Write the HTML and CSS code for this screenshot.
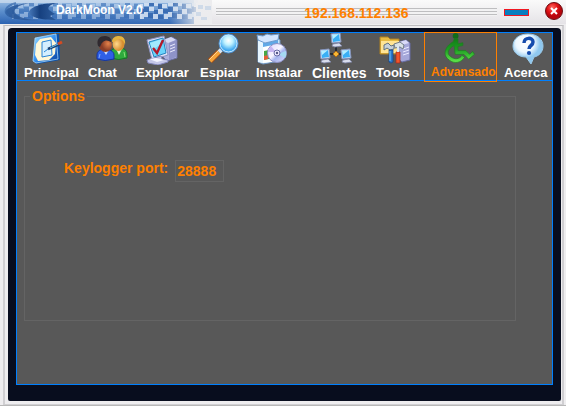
FILE: index.html
```html
<!DOCTYPE html>
<html lang="es">
<head>
<meta charset="utf-8">
<title>DarkMoon V2.0</title>
<link rel="stylesheet" href="styles.css">
</head>
<body>
<div class="window">
  <header class="titlebar">
    <div class="brand">
      <svg class="brand-art" viewBox="0 0 212 24" preserveAspectRatio="none" aria-hidden="true">
        <defs>
          <linearGradient id="sky" x2="0" y2="1"><stop offset="0" stop-color="#9dbfe4"/><stop offset=".45" stop-color="#5e90cd"/><stop offset="1" stop-color="#2b62b2"/></linearGradient>
          <linearGradient id="fade"><stop offset="0" stop-color="#ececee" stop-opacity="0"/><stop offset=".8" stop-color="#ececee" stop-opacity=".05"/><stop offset=".93" stop-color="#ececee" stop-opacity=".8"/><stop offset="1" stop-color="#ececee"/></linearGradient>
          <linearGradient id="moon"><stop offset="0" stop-color="#4677b8"/><stop offset=".4" stop-color="#16407f"/><stop offset="1" stop-color="#2d5c9d"/></linearGradient>
          <pattern id="checks" width="24" height="20" patternUnits="userSpaceOnUse">
            <path fill="#d7e4f4" d="M0 1h5v5H0zM10 1h4v5h-4zM18 4h5v4h-5zM5 7h5v4H5zM14 9h5v5h-5zM0 12h4v5H0zM9 14h5v5H9zM20 14h4v5h-4z"/>
            <path fill="#2a60ac" d="M5 2h5v4H5zM14 4h4v5h-4zM0 7h5v5H0zM10 10h4v4h-4zM19 9h5v4h-5zM4 13h5v5H4zM14 15h5v4h-5z"/>
          </pattern>
        </defs>
        <path fill="url(#sky)" d="M0 0h194v24H0z"/>
        <path fill="#dce6f1" opacity=".6" d="M0 0h198v3H0z"/>
        <path fill="url(#checks)" opacity=".42" d="M12 3h130v18H12z"/>
        <path fill="url(#checks)" opacity=".85" d="M140 3h56v18h-56z"/>
        <path fill="url(#fade)" d="M0 0h212v24H0z"/>
        <path fill="url(#moon)" d="M56 3C42 3 30 7 29 12c0 5 12 8 27 8l-6-4 5-2-6-4c-2-3 1-5 7-7z"/>
        <path fill="#2a599b" opacity=".85" d="M30 3C17 5 12 10 16 14c4 4 13 6 23 6-17 1-30-1-33-6C3 9 14 4 30 3z"/>
        <path fill="none" stroke="#3467a9" stroke-width="2" opacity=".7" d="M16 3C5 6 3 12 9 16"/>
        <path fill="#cfdae8" d="M198 5h5v4h-5zM205 6h6v4h-6zM196 12h5v4h-5zM201 17h6v3h-6z"/>
      </svg>
      <h1 class="brand-name">DarkMoon V2.0</h1>
    </div>
    <div class="rails"><span class="address">192.168.112.136</span></div>
    <button class="minimize" type="button" aria-label="Minimizar"></button>
    <button class="close" type="button" aria-label="Cerrar">
      <svg viewBox="0 0 20 20" aria-hidden="true">
        <defs><radialGradient id="red" cx=".4" cy=".3"><stop offset="0" stop-color="#ff6d65"/><stop offset=".6" stop-color="#e31316"/><stop offset="1" stop-color="#b8060d"/></radialGradient></defs>
        <circle cx="10" cy="10" r="8.500" fill="url(#red)" stroke="#6b1015"/>
        <path stroke="#fff" stroke-width="2" d="m7 7 6 6m0-6-6 6"/>
      </svg>
    </button>
  </header>

  <div class="frame">
    <div class="bezel">
      <div class="panel">
        <nav class="toolbar" aria-label="Secciones">
          <button class="tool" type="button">
            <svg class="icon" viewBox="0 0 32 32" aria-hidden="true">
              <defs><linearGradient id="pb" x2="1" y2="1"><stop offset="0" stop-color="#9bdcff"/><stop offset=".5" stop-color="#338ff0"/><stop offset="1" stop-color="#063f9c"/></linearGradient></defs>
              <path fill="#0851ae" d="m5 4 22-3 1 26-23 4-4-3z"/>
              <path fill="url(#pb)" stroke="#b9e4ff" stroke-width=".7" d="m3 5 21-4 2 25-22 4-3-2z"/>
              <path fill="#fff8d8" d="m8 6 11-2 5 6-1 11-6 6-11 1-3-6 1-11z"/>
              <path fill="#d5efff" stroke="#2883d5" d="m10 9 9-2 1 15-10 2z"/>
              <path stroke="#173f70" stroke-width="2.5" d="m16 16 12-5"/>
              <path stroke="#68c1f2" d="m18 15 8-4"/>
              <path stroke="#d54b22" stroke-width="3" d="m26 11 4-2"/>
              <path fill="none" stroke="#2987d6" d="m16 16-4 3"/>
            </svg>
            <span class="label">Principal</span>
          </button>
          <button class="tool" type="button">
            <svg class="icon" viewBox="0 0 32 32" aria-hidden="true">
              <defs>
                <radialGradient id="skin" cx=".35" cy=".5"><stop stop-color="#ffd98c"/><stop offset="1" stop-color="#d78e31"/></radialGradient>
                <radialGradient id="brown" cx=".7" cy=".4"><stop stop-color="#e5824a"/><stop offset="1" stop-color="#8a3d27"/></radialGradient>
              </defs>
              <path fill="#2eaa3d" stroke="#147425" d="M14 25v-5c0-3 4-5 9-5s8 2 8 6v4q-8 3-17 0z"/>
              <path fill="#dcf5d0" d="m20 16 3 6 3-6z"/>
              <ellipse cx="22.500" cy="11" rx="6" ry="7" fill="url(#skin)"/>
              <path fill="#e6b43e" d="M16 9c0-5 4-6 7-6 4 0 7 3 6 9-1-4-3-6-7-6-2 2-4 3-6 3z"/>
              <path fill="#2f5fe6" stroke="#1234a1" d="M1 26v-4c0-4 4-6 8-6s9 2 9 6v4q-9 3-17 0z"/>
              <path fill="#c5d9ff" d="m7 17 3 5 3-5z"/>
              <ellipse cx="9.500" cy="12" rx="6.500" ry="7" fill="url(#brown)"/>
              <path fill="#302a30" d="M2 13C0 6 4 3 9 3c5 0 7 4 6 6-3-2-6-2-8 0-2 1-2 3-3 5z"/>
              <path stroke="#7faaff" d="m4 21-1 4"/><path stroke="#8ade76" d="m28 19 1 5"/>
            </svg>
            <span class="label">Chat</span>
          </button>
          <button class="tool" type="button">
            <svg class="icon icon-indent" viewBox="0 0 32 32" aria-hidden="true">
              <path fill="#aaaedc" stroke="#6b6fa4" d="m17 7 9-3 5 3v18l-10 3-4-4z"/>
              <path fill="#d7d9f3" d="m17 7 8-3 5 3-8 3z"/>
              <path fill="#8f93c9" d="m23 10 7-3v17l-7 3z"/>
              <path stroke="#e9eafd" d="m24 13 5-2m-5 5 5-2m-5 5 5-2"/>
              <path fill="#dcdff6" stroke="#8b91c1" d="m1 7 17-4 4 19-16 5z"/>
              <path fill="#6bd3fb" stroke="#2586c1" d="m3 9 14-4 3 15-12 4z"/>
              <path fill="#b9f2ff" opacity=".7" d="m4 10 12-4 1 4L6 17z"/>
              <path fill="none" stroke="#b2192c" stroke-width="2.4" d="m7 15 4 5 6-13"/>
              <path fill="#c5c7e8" stroke="#8185ba" d="m8 25 7-2 1 3 6 1v2l-10 3-10-2-1-3z"/>
              <path fill="#f3f3ff" d="m3 26 7-1 8 2-7 2z"/>
            </svg>
            <span class="label">Explorar</span>
          </button>
          <button class="tool" type="button">
            <svg class="icon" viewBox="0 0 32 32" aria-hidden="true">
              <defs><radialGradient id="lens" cx=".5" cy=".35"><stop stop-color="#fff"/><stop offset=".45" stop-color="#bff2ff"/><stop offset="1" stop-color="#42aaf0"/></radialGradient></defs>
              <path stroke="#a14c15" stroke-width="6" d="m2 28 9-9"/>
              <path stroke="#f4a33b" stroke-width="4" d="m2 28 9-9"/>
              <path stroke="#ffd392" d="m1 27 9-9"/>
              <path stroke="#d7e5f1" stroke-width="4" d="m11 19 3-3"/>
              <circle cx="20.500" cy="10.500" r="9.500" fill="url(#lens)" stroke="#4e8cc9"/>
              <circle cx="20.500" cy="10.500" r="8.500" fill="none" stroke="#cae9ff"/>
            </svg>
            <span class="label">Espiar</span>
          </button>
          <button class="tool" type="button">
            <svg class="icon icon-flush" viewBox="0 0 32 32" aria-hidden="true">
              <defs><linearGradient id="disc" x2="1" y2="1"><stop stop-color="#ddd6ff"/><stop offset=".45" stop-color="#f8f5ff"/><stop offset=".6" stop-color="#a5b4ee"/><stop offset="1" stop-color="#e1ddff"/></linearGradient></defs>
              <path fill="#c6e6f9" stroke="#7094bf" d="m2 7 18-3 4 3v21l-17 3-5-2z"/>
              <path fill="#e7f6ff" d="m2 7 5 2v21l-5-1z"/>
              <path fill="#fff" d="m7 9 15-2v21L7 30z"/>
              <path fill="#60a9e7" d="m7 10 15-3v4L7 14z"/>
              <path fill="#d4e6ff" stroke="#6d9bce" d="m2 7-1-5 6 1 4-2 4 1 8-1-1 6-13 3z"/>
              <path fill="#46a746" d="m8 18 5-1v9l-5 1z"/><path fill="#e45f38" d="m8 23 4-1v4l-4 1z"/>
              <circle cx="21" cy="20" r="9.500" fill="url(#disc)" stroke="#8c90c4"/>
              <path fill="#c8b6f2" d="m20 19-5-6q-3 3-3 6z"/><path fill="#a5daf2" d="m22 21 7 4q2-3 1-7z"/>
              <circle cx="21" cy="20" r="3" fill="#eeeaff" stroke="#686ba6"/><circle cx="21" cy="20" r="1.2" fill="#535887"/>
            </svg>
            <span class="label">Instalar</span>
          </button>
          <button class="tool" type="button">
            <svg class="icon" viewBox="0 0 32 32" aria-hidden="true">
              <defs>
                <g id="pc"><path fill="#e4edfc" stroke="#8294be" d="M0 1 9 0l1 9-9 1z"/><path fill="#39aff5" d="m1 2 7-1 1 7-7 1z"/><path fill="#b5eeff" d="m1 2 7-1-6 5z"/><path fill="#d9dded" stroke="#7f86a8" stroke-width=".8" d="m2 11 6-1 3 3-7 1-3-1z"/></g>
              </defs>
              <path fill="none" stroke="#252c34" stroke-width="2" d="M16 13v8M8 21h17"/>
              <use href="#pc" x="11" y="0"/><use href="#pc" x="0" y="16"/><use href="#pc" x="21" y="16"/>
              <path fill="#f6b735" stroke="#aa6816" d="m16 18 3 3-3 3-3-3z"/>
            </svg>
            <span class="label label-large">Clientes</span>
          </button>
          <button class="tool" type="button">
            <svg class="icon icon-near" viewBox="0 0 32 32" aria-hidden="true">
              <path fill="#e9bb42" stroke="#ad8023" d="M1 4h8l2 2h9v15H1z"/><path fill="#ffe494" d="M2 8h18v12H2z"/>
              <path fill="#a5a7d9" stroke="#686da5" d="m20 9 7-2 4 3v17l-8 2-4-3V12z"/><path fill="#d9daf7" d="m20 9 7-2 3 3-7 2z"/><path stroke="#e8e8ff" d="m24 16 6-2m-6 5 6-2m-6 5 6-2"/>
              <path fill="#c7d2db" stroke="#62717e" d="m5 12 4-2 3 3 3-1v4l-4 1-3-2-3 2z"/>
              <path fill="#dbe3e7" stroke="#727d87" d="m15 11 6-2 4 3-1 4-3-2-5 1z"/>
              <path fill="#2878cb" stroke="#153f85" stroke-width=".7" d="M10 17h4v12q-2 2-4 0z"/>
              <path fill="#ef562c" stroke="#a5271e" stroke-width=".7" d="M17 19h4v11h-4z"/><path stroke="#dbe7f1" stroke-width="2" d="M19 13v6"/>
              <path stroke="#76c3ff" d="M11 18v10"/>
            </svg>
            <span class="label">Tools</span>
          </button>
          <button class="tool tool-active" type="button" aria-current="page">
            <svg class="icon icon-wide" viewBox="0 0 32 32" aria-hidden="true">
              <defs><linearGradient id="green" x2="0" y2="1"><stop stop-color="#117d18"/><stop offset=".45" stop-color="#1c9e21"/><stop offset="1" stop-color="#63e84e"/></linearGradient></defs>
              <circle cx="12.500" cy="3" r="3" fill="#116c19"/>
              <path fill="url(#green)" stroke="#207b22" stroke-width=".7" d="M11 6h4v5l5-1v3l-5 1v4h8l4 4 3-3 2 3-6 5-5-5h-9l-1-9c-6 3-8 8-4 11 4 4 10 3 12-1l3 2c-4 6-11 7-16 3-8-5-4-15 4-19z"/>
            </svg>
            <span class="label label-small">Advansado</span>
          </button>
          <button class="tool" type="button">
            <svg class="icon" viewBox="0 0 32 32" aria-hidden="true">
              <defs><radialGradient id="bubble" cx=".4" cy=".3"><stop stop-color="#fff"/><stop offset=".6" stop-color="#ecf7ff"/><stop offset="1" stop-color="#8fc8ef"/></radialGradient></defs>
              <path fill="url(#bubble)" stroke="#9acaea" d="M16 1c9 0 15 5 15 12 0 6-4 10-9 11l-3 7-5-7C6 24 1 19 1 13 1 6 7 1 16 1z"/>
              <path fill="none" stroke="#154cad" stroke-width="3.500" d="M12 10c0-6 9-6 9-1 0 4-4 3-4 7"/>
              <circle cx="17" cy="20" r="2.100" fill="#154cad"/>
            </svg>
            <span class="label">Acerca</span>
          </button>
        </nav>
        <main class="content">
          <fieldset class="options">
            <legend>Options</legend>
            <div class="field">
              <label for="port">Keylogger port:</label>
              <input id="port" type="text" value="28888">
            </div>
          </fieldset>
        </main>
      </div>
    </div>
  </div>
</div>
</body>
</html>
```

FILE: styles.css
```css
* { box-sizing: border-box; }

body {
  margin: 0;
  font: bold 14px/16px "Liberation Sans", Arial, sans-serif;
  color: #ff8000;
}

button { padding: 0; border: 0; background: none; font: inherit; color: inherit; }

.window {
  display: flex;
  flex-direction: column;
  min-height: 100vh;
  background: #eeedef;
  border-bottom: 1px solid #b8b8b8;
}

.titlebar {
  display: flex;
  align-items: center;
  height: 24px;
  padding-right: 2px;
  background: linear-gradient(#fafafa, #e5e3e7);
}

.brand { display: grid; width: 216px; height: 24px; }
.brand-art { grid-area: 1 / 1; width: 212px; height: 24px; }
.brand-name {
  grid-area: 1 / 1;
  z-index: 1;
  margin: 2px 0 0 56px;
  font-size: 12px;
  line-height: 16px;
  color: #fff;
}

.rails {
  flex: 1;
  height: 8px;
  display: flex;
  align-items: center;
  justify-content: center;
  background: repeating-linear-gradient(#bebec0 0 1px, #f2f2f3 1px 3px);
}
.address { padding-top: 2px; }

.minimize {
  width: 25px;
  height: 7px;
  margin: 0 15px 0 7px;
  border: 1px solid #f01822;
  background: #087fc0;
}
.close { width: 20px; height: 20px; margin-bottom: 2px; }
.close svg { display: block; }

.frame {
  flex: 1;
  display: flex;
  margin: 1px 2px 0 3px;
  padding: 3px 1px 3px 3px;
  border: solid #d0cfd2;
  border-width: 1px 2px;
  border-top-color: #bdbcbf;
}

.bezel {
  flex: 1;
  display: flex;
  margin-top: -1px;
  padding: 4px 8px 16px;
  border-radius: 4px 4px 2px 2px;
  background: #080d1e;
}

.panel {
  flex: 1;
  display: flex;
  flex-direction: column;
  border: 1px solid #0080ff;
  background: #585858;
}

.toolbar {
  display: grid;
  grid-template-columns: 64fr 48fr 64fr 56fr 56fr 64fr 55fr 73fr 55fr;
  height: 48px;
  border-bottom: 1px solid #0080ff;
}

.tool {
  display: flex;
  flex-direction: column;
  align-items: flex-start;
  min-width: 0;
  padding-left: 7px;
  font-size: 13px;
  color: #fff;
  white-space: nowrap;
}
.tool-active {
  margin: -1px 0;
  padding-left: 6px;
  border: 1px solid #ff8000;
  color: #ff8000;
}

.icon { width: 32px; height: 32px; margin-left: 8px; flex: none; }
.icon-indent { margin-left: 10px; }
.icon-near { margin-left: 3px; }
.icon-flush { margin-left: 0; }
.icon-wide { margin-left: 12px; }
.tool-active .icon { height: 31px; }
.label-large { font-size: 14px; }
.label-small { font-size: 12px; }

.content { flex: 1; padding: 7px 36px 63px 7px; display: flex; }

.options {
  flex: 1;
  min-width: 0;
  margin: 0;
  padding: 0;
  border: 1px solid #646464;
}
.options legend { margin-left: 5px; padding: 0 2px; }

.field {
  display: flex;
  align-items: flex-start;
  gap: 7px;
  padding: 56px 0 0 39px;
}
.field input {
  width: 49px;
  height: 22px;
  padding: 0 1px;
  border: 1px solid #646464;
  background: transparent;
  color: inherit;
  font: inherit;
}
```
